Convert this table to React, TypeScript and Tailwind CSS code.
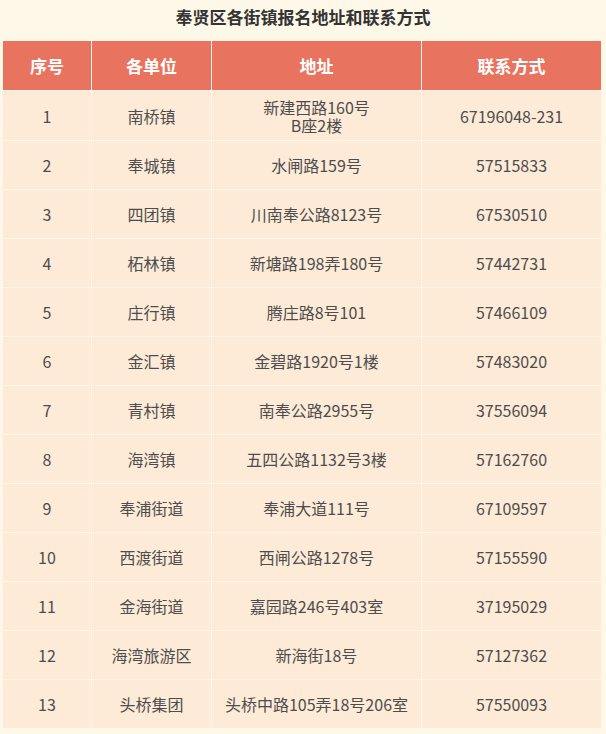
const ROWS: ReadonlyArray<readonly [string, string, string, string]> = [
  ["1", "南桥镇", "新建西路160号\nB座2楼", "67196048-231"],
  ["2", "奉城镇", "水闸路159号", "57515833"],
  ["3", "四团镇", "川南奉公路8123号", "67530510"],
  ["4", "柘林镇", "新塘路198弄180号", "57442731"],
  ["5", "庄行镇", "腾庄路8号101", "57466109"],
  ["6", "金汇镇", "金碧路1920号1楼", "57483020"],
  ["7", "青村镇", "南奉公路2955号", "37556094"],
  ["8", "海湾镇", "五四公路1132号3楼", "57162760"],
  ["9", "奉浦街道", "奉浦大道111号", "67109597"],
  ["10", "西渡街道", "西闸公路1278号", "57155590"],
  ["11", "金海街道", "嘉园路246号403室", "37195029"],
  ["12", "海湾旅游区", "新海街18号", "57127362"],
  ["13", "头桥集团", "头桥中路105弄18号206室", "57550093"],
];

const HEADERS = ["序号", "各单位", "地址", "联系方式"];

export default function App() {
  return (
    <div className="h-[734px] w-[606px] overflow-hidden bg-[#fef8e8] font-['Noto_Sans_CJK_SC',sans-serif]">
      <h1 className="flex h-[40px] items-center justify-center pb-[6px] text-[17px] font-bold text-[#333]">
        奉贤区各街镇报名地址和联系方式
      </h1>
      <table className="ml-[2px] w-[599px] table-fixed border-collapse text-center">
        <colgroup>
          <col className="w-[89px]" />
          <col className="w-[120px]" />
          <col className="w-[210px]" />
          <col className="w-[180px]" />
        </colgroup>
        <thead>
          <tr className="h-[50px] bg-[#e8735f]">
            {HEADERS.map((h) => (
              <th key={h} className="border border-[#fdf3e6] text-[17px] font-bold text-white">
                {h}
              </th>
            ))}
          </tr>
        </thead>
        <tbody>
          {ROWS.map((row, i) => (
            <tr key={row[0]} className={i === 0 ? "h-[50px] bg-[#fdebd8]" : "h-[49px] bg-[#fdebd8]"}>
              {row.map((cell, j) => (
                <td key={j} className="whitespace-pre-line border border-[#fff6ea] text-[16px] leading-[18px] text-[#4d4d4d]">
                  {cell}
                </td>
              ))}
            </tr>
          ))}
        </tbody>
      </table>
    </div>
  );
}
